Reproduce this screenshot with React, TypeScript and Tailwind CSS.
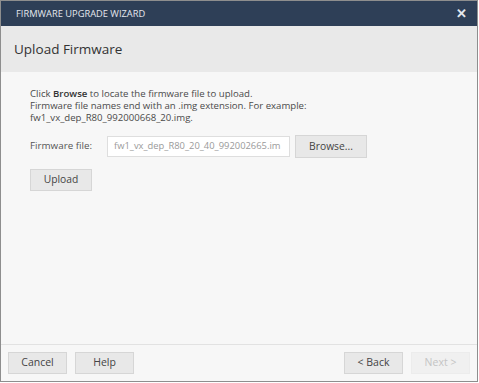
import { memo } from 'react';

const font = { fontFamily: '"Open Sans", "Liberation Sans", sans-serif' };

const FooterButton = memo(function FooterButton({
  label,
  disabled = false,
}: {
  label: string;
  disabled?: boolean;
}) {
  return (
    <button
      className={
        disabled
          ? 'h-[22px] w-[59px] border border-[#ececec] bg-[#f0f0f0] text-[10.5px] text-[#c4c4c4]'
          : 'h-[22px] w-[59px] border border-[#d6d6d6] bg-[#e8e8e8] text-[10.5px] text-[#444]'
      }
    >
      {label}
    </button>
  );
});

export default function App() {
  return (
    <div className="h-[383px] w-[479px] bg-white" style={font}>
      <div className="flex h-[382px] w-[478px] flex-col border border-[#8e8e8e] bg-[#f7f7f7]">
        {/* 타이틀 바 */}
        <div className="flex h-[25px] items-center justify-between bg-[#2e3f57] pl-[15px] pr-[10px]">
          <span className="text-[9.3px] text-[#e4e8ee]">FIRMWARE UPGRADE WIZARD</span>
          <span className="text-[13px] font-bold leading-none text-[#e4e8ee]">✕</span>
        </div>

        {/* 단계 제목 */}
        <div className="flex h-[46px] items-center bg-[#e9e9e9] pl-[13px]">
          <h1 className="text-[13.5px] text-[#333]">Upload Firmware</h1>
        </div>

        {/* 본문 */}
        <div className="flex-1 pl-[29px] pt-[16px]">
          <div className="text-[9.6px] leading-[12px] text-[#4a4a4a]">
            <p>
              Click <span className="font-semibold text-[#333]">Browse</span> to locate the firmware file to upload.
            </p>
            <p>Firmware file names end with an .img extension. For example:</p>
            <p>fw1_vx_dep_R80_992000668_20.img.</p>
          </div>

          <div className="mt-[11px] flex h-[23px] items-center">
            <span className="w-[77px] text-[9.8px] text-[#555]">Firmware file:</span>
            <div className="flex h-[21px] w-[183px] items-center overflow-hidden whitespace-nowrap border border-[#dedede] bg-white pl-[6px] text-[9.4px] text-[#9a9a9a]">
              fw1_vx_dep_R80_20_40_992002665.im
            </div>
            <button className="ml-[5px] h-[23px] w-[72px] border border-[#d6d6d6] bg-[#e8e8e8] text-[10.3px] text-[#444]">
              Browse...
            </button>
          </div>

          <button className="mt-[11px] h-[22px] w-[62px] border border-[#d6d6d6] bg-[#e8e8e8] text-[10.3px] text-[#444]">
            Upload
          </button>
        </div>

        {/* 하단 버튼 */}
        <div className="flex h-[37px] items-start justify-between border-t border-[#e2e2e2] pl-[7px] pr-[7px] pt-[7px]">
          <div className="flex gap-[8px]">
            <FooterButton label="Cancel" />
            <FooterButton label="Help" />
          </div>
          <div className="flex gap-[8px]">
            <FooterButton label="< Back" />
            <FooterButton label="Next >" disabled />
          </div>
        </div>
      </div>
    </div>
  );
}
